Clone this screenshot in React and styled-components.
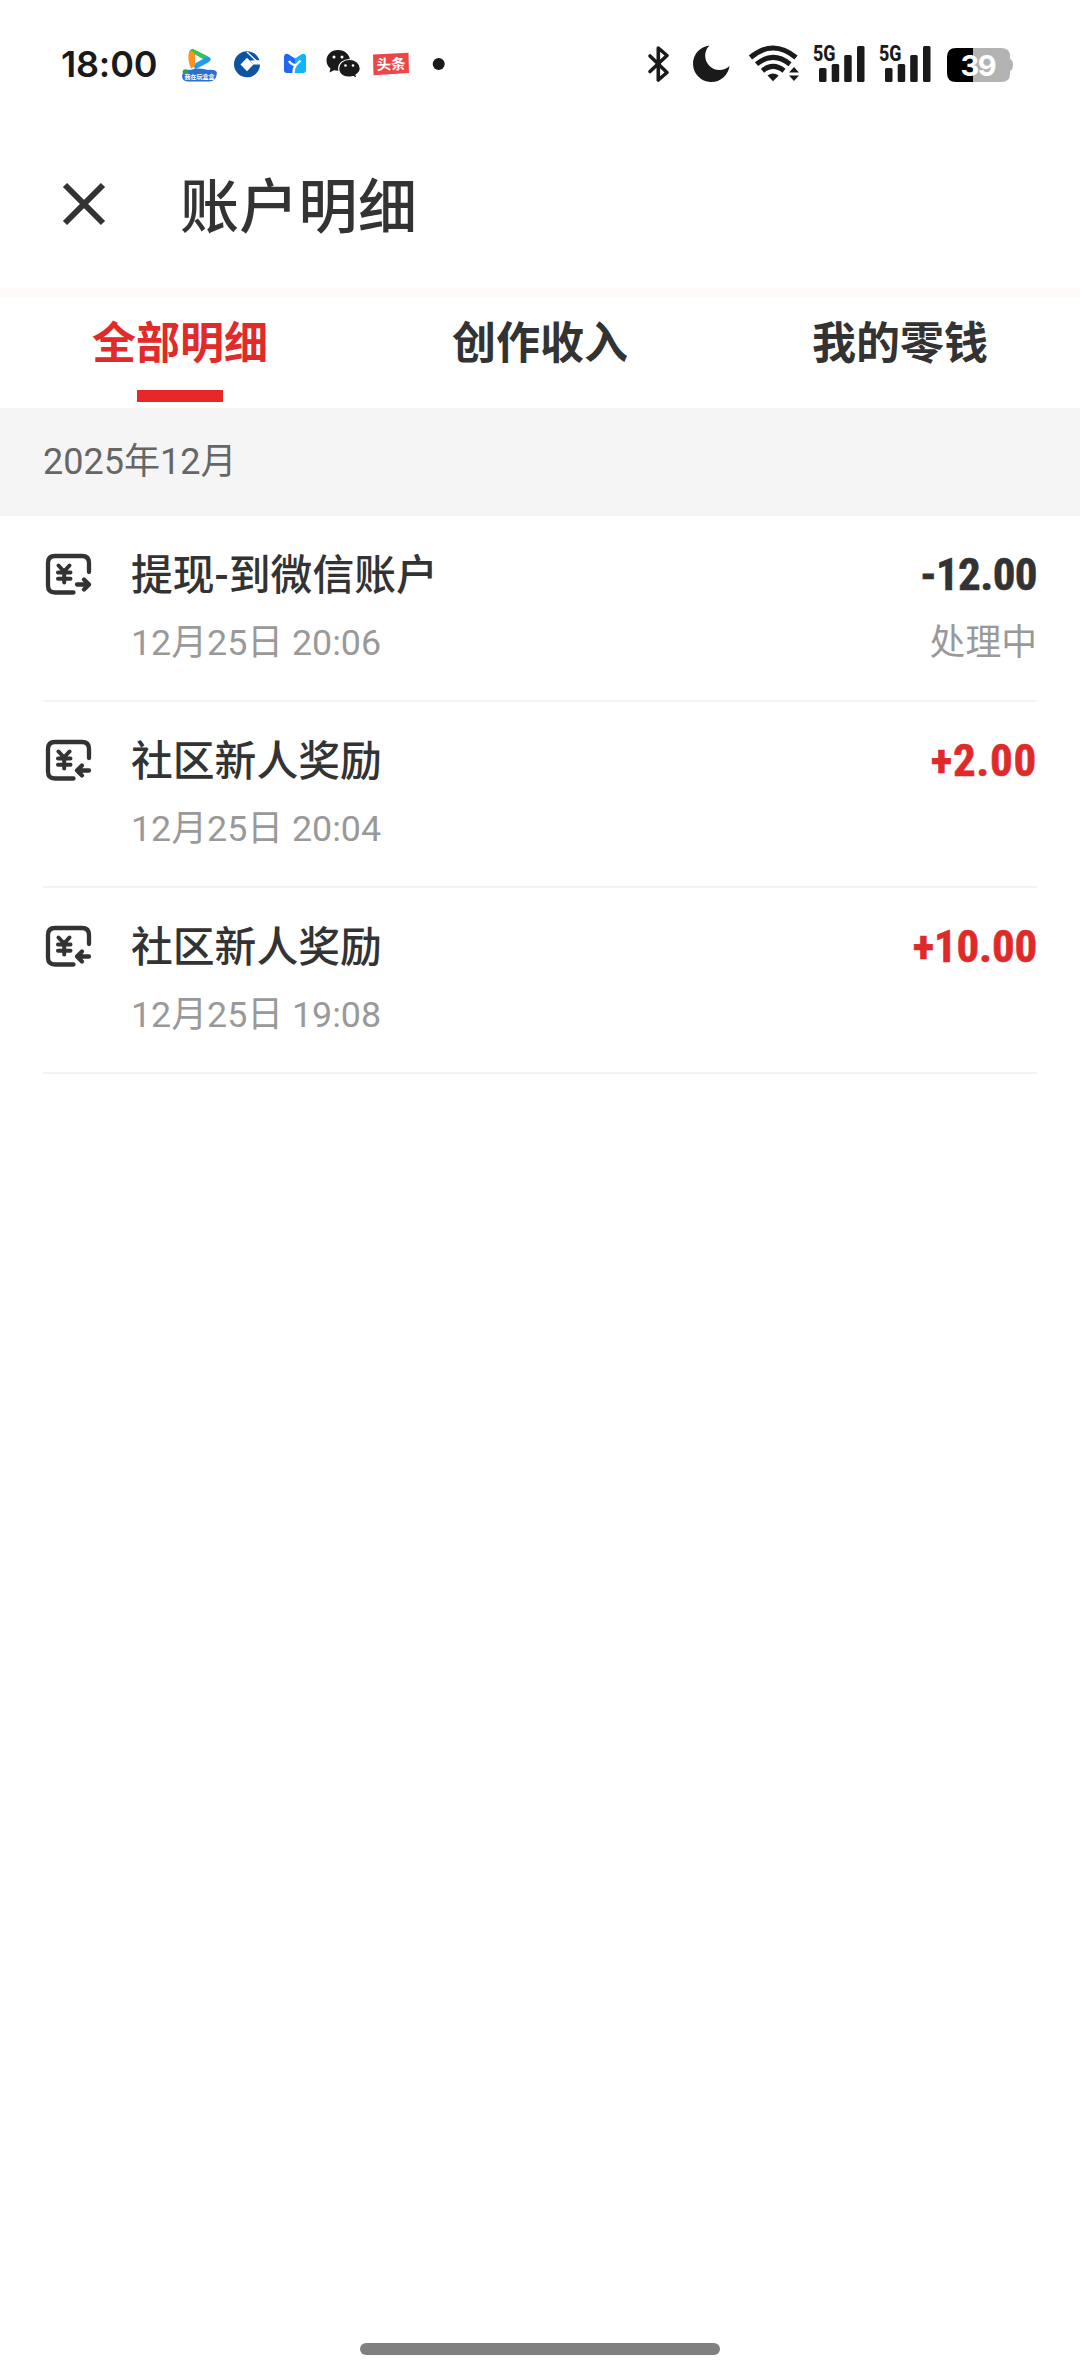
import React from "react";
import styled, { createGlobalStyle } from 'styled-components';

const GlobalStyle = createGlobalStyle`
    * {
        box-sizing: border-box;
    }

    body {
        margin: 0;
        background: #ffffff;
        font-family: Roboto, 'Noto Sans CJK SC', sans-serif;
        color: #333333;
    }
`

const Page = styled.div`
    width: 1080px;
    height: 2376px;
    display: flex;
    flex-direction: column;
    background: #ffffff;
    overflow: hidden;
`

const StatusBar = styled.div`
    height: 128px;
    flex: none;
    display: flex;
    justify-content: space-between;
    align-items: center;
    padding: 0 67px 0 61px;
`

const StatusGroup = styled.div`
    display: flex;
    align-items: center;
`

const Clock = styled.span`
    width: 114px;
    font-family: Inter, sans-serif;
    font-size: 36px;
    font-weight: 600;
    line-height: 44px;
    letter-spacing: -0.2px;
    color: #1a1a1a;
`

const AppIcon = styled.svg`
    width: 48px;
    height: 44px;
    display: block;
`

const StatusIcon = styled.svg`
    display: block;
    height: 40px;
    width: ${props => props.$w}px;
    margin-left: ${props => props.$gap || 0}px;
    overflow: visible;
`

const TitleBar = styled.header`
    height: 160px;
    flex: none;
    display: flex;
    align-items: center;
    padding: 0 60px 8px;
`

const CloseButton = styled.button`
    width: 48px;
    height: 48px;
    padding: 0;
    border: none;
    background: none;

    svg {
        display: block;
    }
`

const Title = styled.h1`
    margin: 0 0 0 72px;
    padding-top: 7px;
    font-size: 59px;
    font-weight: 500;
    line-height: 80px;
    letter-spacing: 0.3px;
`

const Stripe = styled.div`
    height: 9px;
    flex: none;
    background: #fffafa;
`

const Tabs = styled.nav`
    height: 111px;
    flex: none;
    display: grid;
    grid-template-columns: repeat(3, 1fr);
`

const Tab = styled.div`
    display: flex;
    flex-direction: column;
    align-items: center;
    padding-top: 15px;
    font-size: 44px;
    font-weight: 700;
    line-height: 64px;
    color: ${props => props.$active ? '#e12a2a' : '#333333'};

    &::after {
        content: '';
        width: 86px;
        height: 12px;
        margin-top: 14px;
        background: ${props => props.$active ? '#e82826' : 'transparent'};
    }
`

const Month = styled.div`
    height: 108px;
    flex: none;
    padding-left: 43px;
    background: #f5f5f5;
    font-size: 36px;
    line-height: 108px;
    color: #666666;
`

const List = styled.ul`
    flex: 1;
    margin: 0;
    padding: 0 43px;
    list-style: none;
`

const Row = styled.li`
    height: 186px;
    display: flex;
    padding-top: 30px;
    border-bottom: 2px solid #f3f3f3;
`

const RowIcon = styled.svg`
    width: 51px;
    height: 51px;
    flex: none;
    margin-top: 4px;
`

const RowText = styled.div`
    flex: 1;
    display: flex;
    flex-direction: column;
    margin-left: 37px;
`

const RowTitle = styled.span`
    padding-top: 1px;
    font-size: 41.8px;
    font-weight: 500;
    line-height: 58px;
`

const RowNote = styled.span`
    margin-top: 11px;
    font-size: 35.8px;
    line-height: 54px;
    color: #999999;
`

const RowSide = styled(RowText)`
    flex: none;
    align-items: flex-end;

    ${RowNote} {
        margin-top: 12px;
    }
`

const Amount = styled.span`
    font-size: 45px;
    font-weight: 700;
    font-stretch: condensed;
    line-height: 58px;
    letter-spacing: ${props => props.$spacing}px;
    -webkit-text-stroke: 0.6px currentColor;
    color: ${props => props.$income ? '#e02a2a' : '#333333'};
`

const Footer = styled.footer`
    height: 33px;
    flex: none;
    display: flex;
    justify-content: center;
`

const HomeIndicator = styled.div`
    width: 360px;
    height: 12px;
    border-radius: 6px;
    background: #808080;
`

const tabs = ['全部明细', '创作收入', '我的零钱']

const records = [
    { title: '提现-到微信账户', time: '12月25日 20:06', amount: '-12.00', spacing: -0.6, state: '处理中' },
    { title: '社区新人奖励', time: '12月25日 20:04', amount: '+2.00', spacing: 0.7, income: true },
    { title: '社区新人奖励', time: '12月25日 19:08', amount: '+10.00', spacing: -0.2, income: true },
]

const AppIcons = () => (
    <>
        <AppIcon viewBox="175 43 48 44">
            <path d="M189 54 Q190 48.500 195 51 L209 58 Q212.500 60 209 63 L195 70.500 Z" fill="#1f9bf0" />
            <path d="M190 51.500 Q192 49 195 51 L207 57 L203 60 L195 56 Z" fill="#35c64a" />
            <path d="M189 53 Q190 51 192 52 L196 56 L195 67 L191 69.500 Q187 61 189 53 Z" fill="#ff9022" />
            <path d="M195 55.500 L203 60 L195 64.500 Z" fill="#ffffff" />
            <path d="M183 74 Q185 70 190 71 Q199 68 208 71 Q216 70 217 74 Q216 82 210 82.500 H188 Q182 82 182 77 Z" fill="#2d6fd0" />
            <circle cx="185.500" cy="73" r="2.800" fill="#2e9e57" />
            <text x="199.500" y="79.500" textAnchor="middle" fontSize="6" fontWeight="700" fill="#ffffff">我在玩盒盒</text>
        </AppIcon>
        <AppIcon viewBox="223 43 48 44">
            <circle cx="247" cy="65.300" r="13" fill="#0c55a3" />
            <path d="M247 58.800 L253.500 65.500 L247 72.200 L240.500 65.500 Z" fill="#ffffff" />
            <path d="M250 61.800 L254 61.200 H262 V65.600 H253.600 Z" fill="#ffffff" />
            <path d="M247 53 L256.500 62" stroke="#ffffff" strokeWidth="1.300" />
        </AppIcon>
        <AppIcon viewBox="271 43 48 44">
            <path d="M284 57 Q285 54 288 55 L295 59.500 L295.300 74 H287 Q284 74 284 71 Z" fill="#2267f2" />
            <path d="M306 57 Q305 54 302 55 L295 59.500 L295 74 H303 Q306 74 306 71 Z" fill="#12b4fa" />
            <path d="M289 62 Q291 65.500 295.500 66.500 L300.500 61.500 M296 66 Q293.500 69 293.500 74" fill="none" stroke="#ffffff" strokeWidth="2.400" />
        </AppIcon>
        <AppIcon viewBox="319 43 48 44">
            <path d="M338 51 C331 51 326.500 56 326.500 61.500 C326.500 65 328 67.500 330.500 69.500 L329.500 73.500 L334 71.300 C343 73.500 350 68 350 61.500 C350 56 345 51 338 51 Z" fill="#1a1a1a" />
            <path d="M349.500 60.500 C343 60.500 338.700 64.500 338.700 69.500 C338.700 76 345 79.500 353 77.500 L357 79.500 L356 76 C359 74 360.300 72 360.300 69.500 C360.300 64.500 355.500 60.500 349.500 60.500 Z" fill="#1a1a1a" stroke="#ffffff" strokeWidth="1.200" />
            <g fill="#ffffff">
                <circle cx="334" cy="58" r="1.500" />
                <circle cx="342" cy="58" r="1.500" />
                <circle cx="345.500" cy="66.500" r="1.300" />
                <circle cx="353" cy="66.500" r="1.300" />
            </g>
        </AppIcon>
        <AppIcon viewBox="367 43 48 44">
            <path d="M373 55.500 L408.500 53.700 L409 74 L373.500 76.200 Z" fill="#ec4648" />
            <text x="391" y="70.500" textAnchor="middle" fontSize="14.500" fontWeight="700" fill="#ffffff" transform="rotate(-2 391 65)">头条</text>
        </AppIcon>
        <AppIcon viewBox="415 43 48 44">
            <circle cx="438.700" cy="65" r="6" fill="#1a1a1a" />
        </AppIcon>
    </>
)

const Signal = ({gap}) => (
    <StatusIcon $w={52} $gap={gap} viewBox="813 44 52 40" fill="#1a1a1a">
        <text x="813" y="61" fontSize="22" fontWeight="800" textLength="22.500" lengthAdjust="spacingAndGlyphs">5G</text>
        <rect x="819" y="68" width="7.500" height="14" rx="1.500" />
        <rect x="831.700" y="64" width="7.500" height="18" rx="1.500" />
        <rect x="844.200" y="55" width="7.500" height="27" rx="1.500" />
        <rect x="857" y="46" width="7.500" height="36" rx="1.500" />
    </StatusIcon>
)

const SystemIcons = () => (
    <>
        <StatusIcon $w={22} viewBox="648 44 22 40" fill="none" stroke="#1a1a1a" strokeWidth="3.600" strokeLinejoin="round" strokeLinecap="round">
            <path d="M650 56 L667 72.500 L658.300 80 V48 L667 55.500 L650 71.500" />
        </StatusIcon>
        <StatusIcon $w={37} $gap={23} viewBox="693 44 37 40">
            <path d="M709.500 45.500 A18.300 18.300 0 1 0 729.500 66 A14.300 14.300 0 0 1 709.500 45.500 Z" fill="#1a1a1a" />
        </StatusIcon>
        <StatusIcon $w={50} $gap={19} viewBox="749 44 50 40">
            <g fill="none" stroke="#1a1a1a" strokeWidth="5">
                <path d="M750.500 57.500 Q773 38.500 796 57.500" />
                <path d="M756.500 64.200 Q773 50.500 790 64.200" />
                <path d="M762.500 70.800 Q773 62 784 70.800" />
            </g>
            <path d="M767.500 75.500 Q773 71.500 778.700 75.500 L773 81.300 Z" fill="#1a1a1a" />
            <path d="M789 72.500 L794 67 L799 72.500 Z M789 75.500 L794 81 L799 75.500 Z" fill="#1a1a1a" />
        </StatusIcon>
        <Signal gap={14} />
        <Signal gap={14} />
        <StatusIcon $w={66} $gap={16} viewBox="947 44 66 40">
            <path d="M973 48 H1001 Q1010 48 1010 56 V59 Q1013 60 1013 65 Q1013 70 1010 71 V74 Q1010 82 1001 82 H973 Z" fill="#b3b3b3" />
            <path d="M973 48 H956 Q947 48 947 57 V73 Q947 82 956 82 H973 Z" fill="#000000" />
            <text x="978.500" y="76" textAnchor="middle" fontFamily="Inter, sans-serif" fontSize="29" fontWeight="700" fill="#ffffff" textLength="36">39</text>
        </StatusIcon>
    </>
)

const MoneyIcon = ({income}) => (
    <RowIcon viewBox="43 550 51 51" fill="none" stroke="#333333" strokeWidth="4.300" strokeLinecap="round" strokeLinejoin="round">
        <path d="M73.500 592.500 H55 Q48 592.500 48 585.500 V563 Q48 556 55 556 H82 Q89 556 89 563 V572" />
        <path d="M58.500 565.500 L64 571.500 L69.500 565.500 M58 572.500 H70.500 M58 578.700 H70.500 M64.200 572 V582.500" strokeWidth="4" />
        {income
            ? <path d="M89 584.500 H77 M82 579.500 L77 584.500 L82 589.500" />
            : <path d="M77 584.500 H89 M84 579.500 L89 584.500 L84 589.500" />}
    </RowIcon>
)

const App = () => {
    return (
        <>
            <GlobalStyle />
            <Page>
                <StatusBar>
                    <StatusGroup>
                        <Clock>18:00</Clock>
                        <AppIcons />
                    </StatusGroup>
                    <StatusGroup>
                        <SystemIcons />
                    </StatusGroup>
                </StatusBar>
                <TitleBar>
                    <CloseButton aria-label="关闭">
                        <svg width="48" height="48" viewBox="0 0 48 48" stroke="#333333" strokeWidth="6">
                            <path d="M5 5 L43 43 M43 5 L5 43" />
                        </svg>
                    </CloseButton>
                    <Title>账户明细</Title>
                </TitleBar>
                <Stripe />
                <Tabs>
                    {tabs.map((name, index) => (
                        <Tab key={name} $active={index === 0}>{name}</Tab>
                    ))}
                </Tabs>
                <Month>2025年12月</Month>
                <List>
                    {records.map(item => (
                        <Row key={item.time}>
                            <MoneyIcon income={item.income} />
                            <RowText>
                                <RowTitle>{item.title}</RowTitle>
                                <RowNote>{item.time}</RowNote>
                            </RowText>
                            <RowSide>
                                <Amount $income={item.income} $spacing={item.spacing}>{item.amount}</Amount>
                                {item.state && <RowNote>{item.state}</RowNote>}
                            </RowSide>
                        </Row>
                    ))}
                </List>
                <Footer>
                    <HomeIndicator />
                </Footer>
            </Page>
        </>
    )
}

export default App
